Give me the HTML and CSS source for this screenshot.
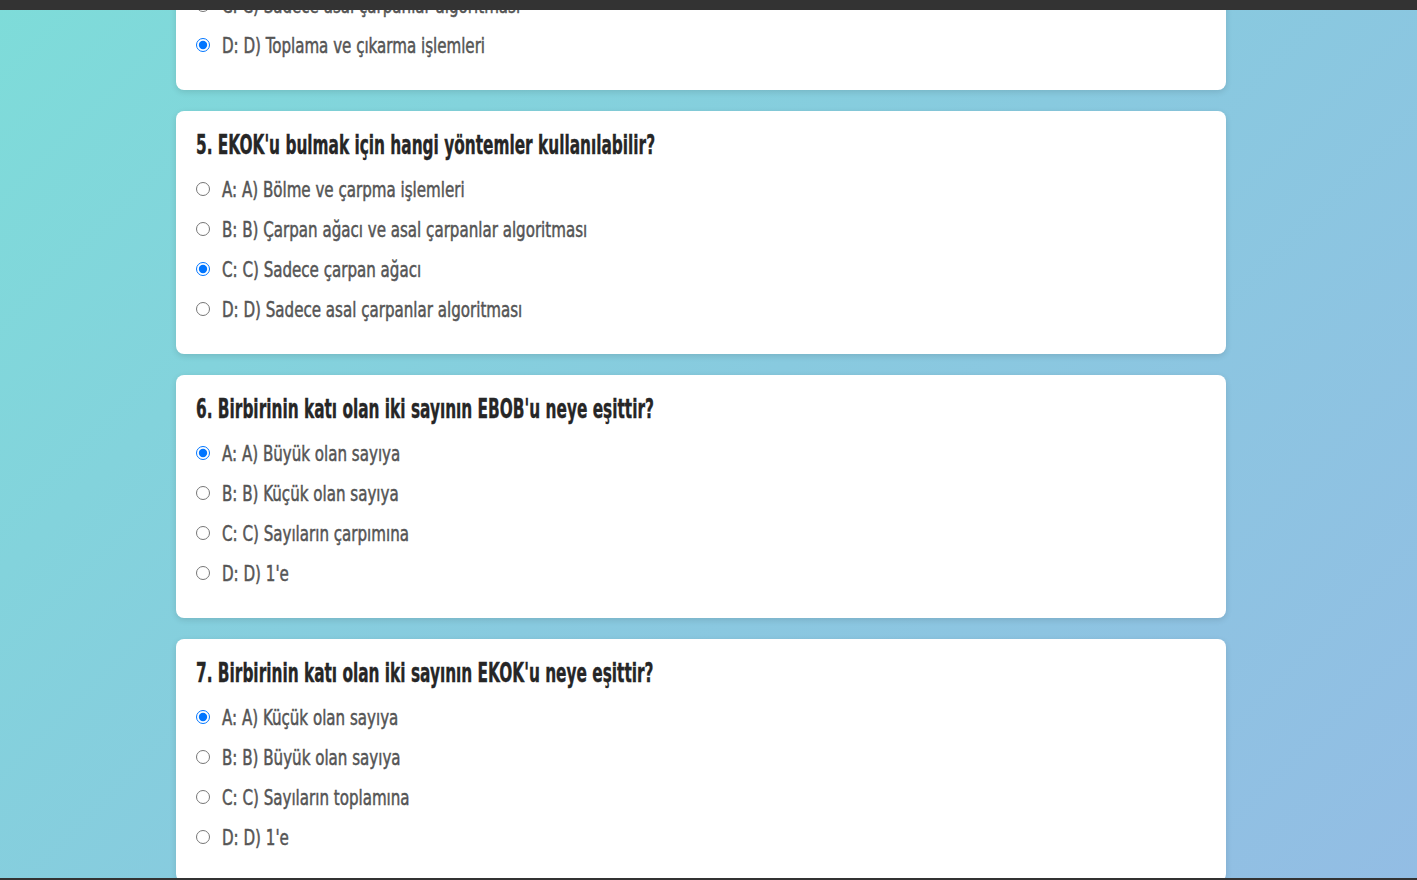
FILE: index.html
```html
<!DOCTYPE html>
<html lang="tr">
<head>
<meta charset="utf-8">
<title>Test</title>
<link rel="stylesheet" href="styles.css">
</head>
<body>
<div class="topbar"></div>
<main class="quiz">
  <section class="card">
    <h2 class="question">4. EBOB'u bulmak için hangi yöntemler kullanılabilir?</h2>
    <label class="option"><input type="radio" name="q4"><span>A: A) Bölme işlemi</span></label>
    <label class="option"><input type="radio" name="q4"><span>B: B) Çarpan ağacı</span></label>
    <label class="option"><input type="radio" name="q4"><span>C: C) Sadece asal çarpanlar algoritması</span></label>
    <label class="option"><input type="radio" name="q4" checked><span>D: D) Toplama ve çıkarma işlemleri</span></label>
  </section>
  <section class="card">
    <h2 class="question">5. EKOK'u bulmak için hangi yöntemler kullanılabilir?</h2>
    <label class="option"><input type="radio" name="q5"><span>A: A) Bölme ve çarpma işlemleri</span></label>
    <label class="option"><input type="radio" name="q5"><span>B: B) Çarpan ağacı ve asal çarpanlar algoritması</span></label>
    <label class="option"><input type="radio" name="q5" checked><span>C: C) Sadece çarpan ağacı</span></label>
    <label class="option"><input type="radio" name="q5"><span>D: D) Sadece asal çarpanlar algoritması</span></label>
  </section>
  <section class="card">
    <h2 class="question">6. Birbirinin katı olan iki sayının EBOB'u neye eşittir?</h2>
    <label class="option"><input type="radio" name="q6" checked><span>A: A) Büyük olan sayıya</span></label>
    <label class="option"><input type="radio" name="q6"><span>B: B) Küçük olan sayıya</span></label>
    <label class="option"><input type="radio" name="q6"><span>C: C) Sayıların çarpımına</span></label>
    <label class="option"><input type="radio" name="q6"><span>D: D) 1'e</span></label>
  </section>
  <section class="card">
    <h2 class="question">7. Birbirinin katı olan iki sayının EKOK'u neye eşittir?</h2>
    <label class="option"><input type="radio" name="q7" checked><span>A: A) Küçük olan sayıya</span></label>
    <label class="option"><input type="radio" name="q7"><span>B: B) Büyük olan sayıya</span></label>
    <label class="option"><input type="radio" name="q7"><span>C: C) Sayıların toplamına</span></label>
    <label class="option"><input type="radio" name="q7"><span>D: D) 1'e</span></label>
  </section>
</main>
<div class="bottombar"></div>
</body>
</html>
```
FILE: styles.css
```css
html, body {
  margin: 0;
  padding: 0;
  height: 100%;
  overflow: hidden;
}
body {
  background: linear-gradient(135deg, #7edcd9 0%, #88cadf 50%, #93bde4 100%);
  font-family: "DejaVu Sans Condensed", "DejaVu Sans", sans-serif;
  padding-right: 15px;
  box-sizing: border-box;
}
.topbar {
  position: fixed;
  top: 0;
  left: 0;
  right: 0;
  height: 10px;
  background: #333333;
  z-index: 5;
}
.bottombar {
  position: fixed;
  bottom: 0;
  left: 0;
  right: 0;
  height: 2px;
  background: #333333;
  z-index: 5;
}
.quiz {
  width: 1050px;
  margin: -153px auto 0;
  display: flex;
  flex-direction: column;
  gap: 21px;
}
.card {
  background: #ffffff;
  border-radius: 8px;
  box-shadow: 0 2px 6px rgba(0, 0, 0, 0.12);
  padding: 20px 20px 25px;
  height: 243px;
  box-sizing: border-box;
}
.question {
  margin: 0 0 10px;
  font-size: 27px;
  line-height: 28px;
  font-weight: 700;
  color: #262626;
  -webkit-text-stroke: 0.4px #262626;
  transform: scaleX(0.632);
  transform-origin: left center;
  white-space: nowrap;
}
.option {
  display: flex;
  align-items: center;
  height: 40px;
  font-size: 21.5px;
  color: #555555;
}
.option span {
  display: inline-block;
  -webkit-text-stroke: 0.5px #555555;
  transform: scaleX(0.78);
  transform-origin: left center;
  white-space: nowrap;
}
.option input {
  width: 14px;
  height: 14px;
  margin: 0 12px 0 0;
}
```
